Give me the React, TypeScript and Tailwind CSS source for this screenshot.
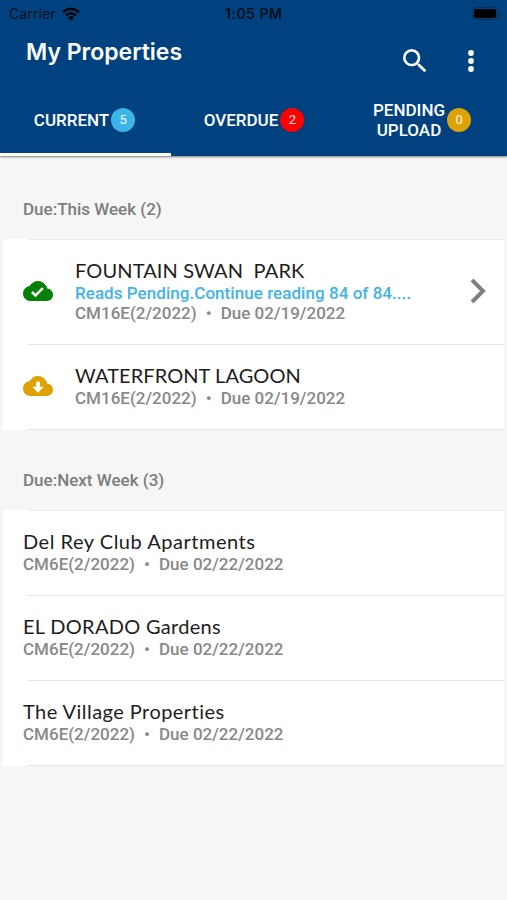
import { MdCloudDone, MdSearch } from "react-icons/md";

type Property = {
  name: string;
  nameClass: string;
  code: string;
  due: string;
  note?: string;
  status?: "done" | "download";
};

const thisWeek: Property[] = [
  {
    name: "FOUNTAIN SWAN  PARK",
    nameClass: "tracking-[0.12px]",
    code: "CM16E(2/2022)",
    due: "Due 02/19/2022",
    note: "Reads Pending.Continue reading 84 of 84....",
    status: "done",
  },
  {
    name: "WATERFRONT LAGOON",
    nameClass: "tracking-[0.08px]",
    code: "CM16E(2/2022)",
    due: "Due 02/19/2022",
    status: "download",
  },
];

const nextWeek: Property[] = [
  { name: "Del Rey Club Apartments", nameClass: "tracking-[0.52px]", code: "CM6E(2/2022)", due: "Due 02/22/2022" },
  { name: "EL DORADO Gardens", nameClass: "tracking-[0.3px]", code: "CM6E(2/2022)", due: "Due 02/22/2022" },
  { name: "The Village Properties", nameClass: "tracking-[0.45px]", code: "CM6E(2/2022)", due: "Due 02/22/2022" },
];

function StatusBar() {
  return (
    <div className="relative h-7 flex items-center justify-between pl-[9px] pr-[7px] pb-px text-[14px] text-[#06101c] font-['Inter',sans-serif]">
      <div className="flex items-center gap-1.5">
        <span className="w-[47px] tracking-[0.1px]">Carrier</span>
        <svg width="18" height="14" viewBox="0 0 18 14" fill="none" stroke="#000" strokeWidth="2.4">
          <path d="M1 5.2C5.5.8 12.5.8 17 5.2" />
          <path d="M4 8.4c2.8-2.7 7.2-2.7 10 0" />
          <path d="M9 13.6 5.9 10.4c1.7-1.6 4.5-1.6 6.2 0z" fill="#000" stroke="none" />
        </svg>
      </div>
      <span className="absolute left-[225px] font-semibold whitespace-nowrap tracking-[0.5px]">1:05 PM</span>
      <div className="flex items-center gap-px">
        <div className="w-[26px] h-[13px] rounded-[4px] border border-[#06305a] p-px">
          <div className="w-full h-full rounded-[2px] bg-black" />
        </div>
        <div className="w-[1.5px] h-1 rounded-r bg-[#06305a]" />
      </div>
    </div>
  );
}

function Badge({ count, className }: { count: number; className: string }) {
  return (
    <span
      className={`w-6 h-6 shrink-0 rounded-full flex items-center justify-center text-[13px] font-normal text-white/90 ${className}`}
    >
      {count}
    </span>
  );
}

function Header() {
  return (
    <header className="relative h-[156px] bg-[#00427f] text-white shadow-[0_1px_2px_rgba(0,0,0,0.5)]">
      <StatusBar />
      <div className="h-[58px] flex items-start justify-between pl-[26px] pr-[33px]">
        <h1 className="mt-2 text-[23px] leading-8 font-semibold font-['Inter',sans-serif]">My Properties</h1>
        <div className="mt-[17px] flex items-center gap-[37px]">
          <MdSearch size={32} />
          <svg width="6" height="22" viewBox="0 0 6 22" fill="currentColor">
            <circle cx="3" cy="3" r="2.9" />
            <circle cx="3" cy="11" r="2.9" />
            <circle cx="3" cy="19" r="2.9" />
          </svg>
        </div>
      </div>
      <nav className="h-[70px] grid grid-cols-3 text-[17px] leading-5 font-medium">
        <div className="flex items-center justify-center border-b-[3px] border-white w-[171px] pr-[2px] gap-0.5">
          <span>CURRENT</span>
          <Badge count={5} className="bg-[#3cb4e7]" />
        </div>
        <div className="flex items-center justify-center gap-0.5 border-b-[3px] border-transparent pl-px">
          <span>OVERDUE</span>
          <Badge count={2} className="bg-[#fe0000]" />
        </div>
        <div className="flex items-center justify-center gap-0.5 border-b-[3px] border-transparent pr-px">
          <span className="text-center">
            PENDING
            <br />
            UPLOAD
          </span>
          <Badge count={0} className="bg-[#dda306]" />
        </div>
      </nav>
    </header>
  );
}

function StatusIcon({ status }: { status: "done" | "download" }) {
  if (status === "done") return <MdCloudDone size={30} className="text-[#078007]" />;
  return (
    <svg width="30" height="30" viewBox="0 0 24 24" fill="#dda306">
      <path d="M19.35 10.04A7.49 7.49 0 0 0 12 4C9.11 4 6.6 5.64 5.35 8.04A5.994 5.994 0 0 0 0 14c0 3.31 2.69 6 6 6h13c2.76 0 5-2.24 5-5 0-2.64-2.05-4.78-4.65-4.96z" />
      <path d="M10.5 8.5h3v4h3L12 17.3l-4.5-4.8h3z" fill="#fff" />
    </svg>
  );
}

function PropertyRow({ property }: { property: Property }) {
  const { name, nameClass, code, due, note, status } = property;
  return (
    <li>
      <div className={`flex items-center pl-5 pr-[17px] ${note ? "h-[104px]" : "h-[84px]"}`}>
        {status && (
          <div className="w-[52px] shrink-0 pb-0.5">
            <StatusIcon status={status} />
          </div>
        )}
        <div className="flex-1 whitespace-pre">
          <div className={`-mt-[3px] mb-px text-[20px] leading-[23px] text-[#1d1d1d] font-['Lato',sans-serif] ${nameClass}`}>
            {name}
          </div>
          {note && <div className="text-[17px] leading-5 font-medium text-[#42b3e8] tracking-[0.05px]">{note}</div>}
          <div className="flex text-[17px] leading-5 font-medium text-[#888]">
            <span>{code}</span>
            <span className="w-6 text-center">•</span>
            <span>{due}</span>
          </div>
        </div>
        {note && (
          <svg className="mb-0.5" width="18" height="26" viewBox="0 0 18 26" fill="none" stroke="#808080" strokeWidth="4">
            <path d="M3 2 14 13 3 24" />
          </svg>
        )}
      </div>
      <div className="ml-[25px] h-px bg-[#e6e6e6]" />
    </li>
  );
}

function Section({ title, items }: { title: string; items: Property[] }) {
  return (
    <section>
      <h2 className="h-20 pt-[38px] pl-[23px] text-[17px] leading-6 font-medium text-[#7d7d7d]">{title}</h2>
      <ul className="ml-[3px] mr-[3px] bg-white">
        <li className="ml-[25px] h-px bg-[#ececec]" />
        {items.map((item) => (
          <PropertyRow key={item.name} property={item} />
        ))}
      </ul>
    </section>
  );
}

export default function App() {
  return (
    <div className="w-[507px] h-[900px] overflow-hidden bg-[#f6f6f6] font-['Roboto',sans-serif]">
      <Header />
      <main className="pt-[3px]">
        <Section title="Due:This Week (2)" items={thisWeek} />
        <Section title="Due:Next Week (3)" items={nextWeek} />
      </main>
    </div>
  );
}
